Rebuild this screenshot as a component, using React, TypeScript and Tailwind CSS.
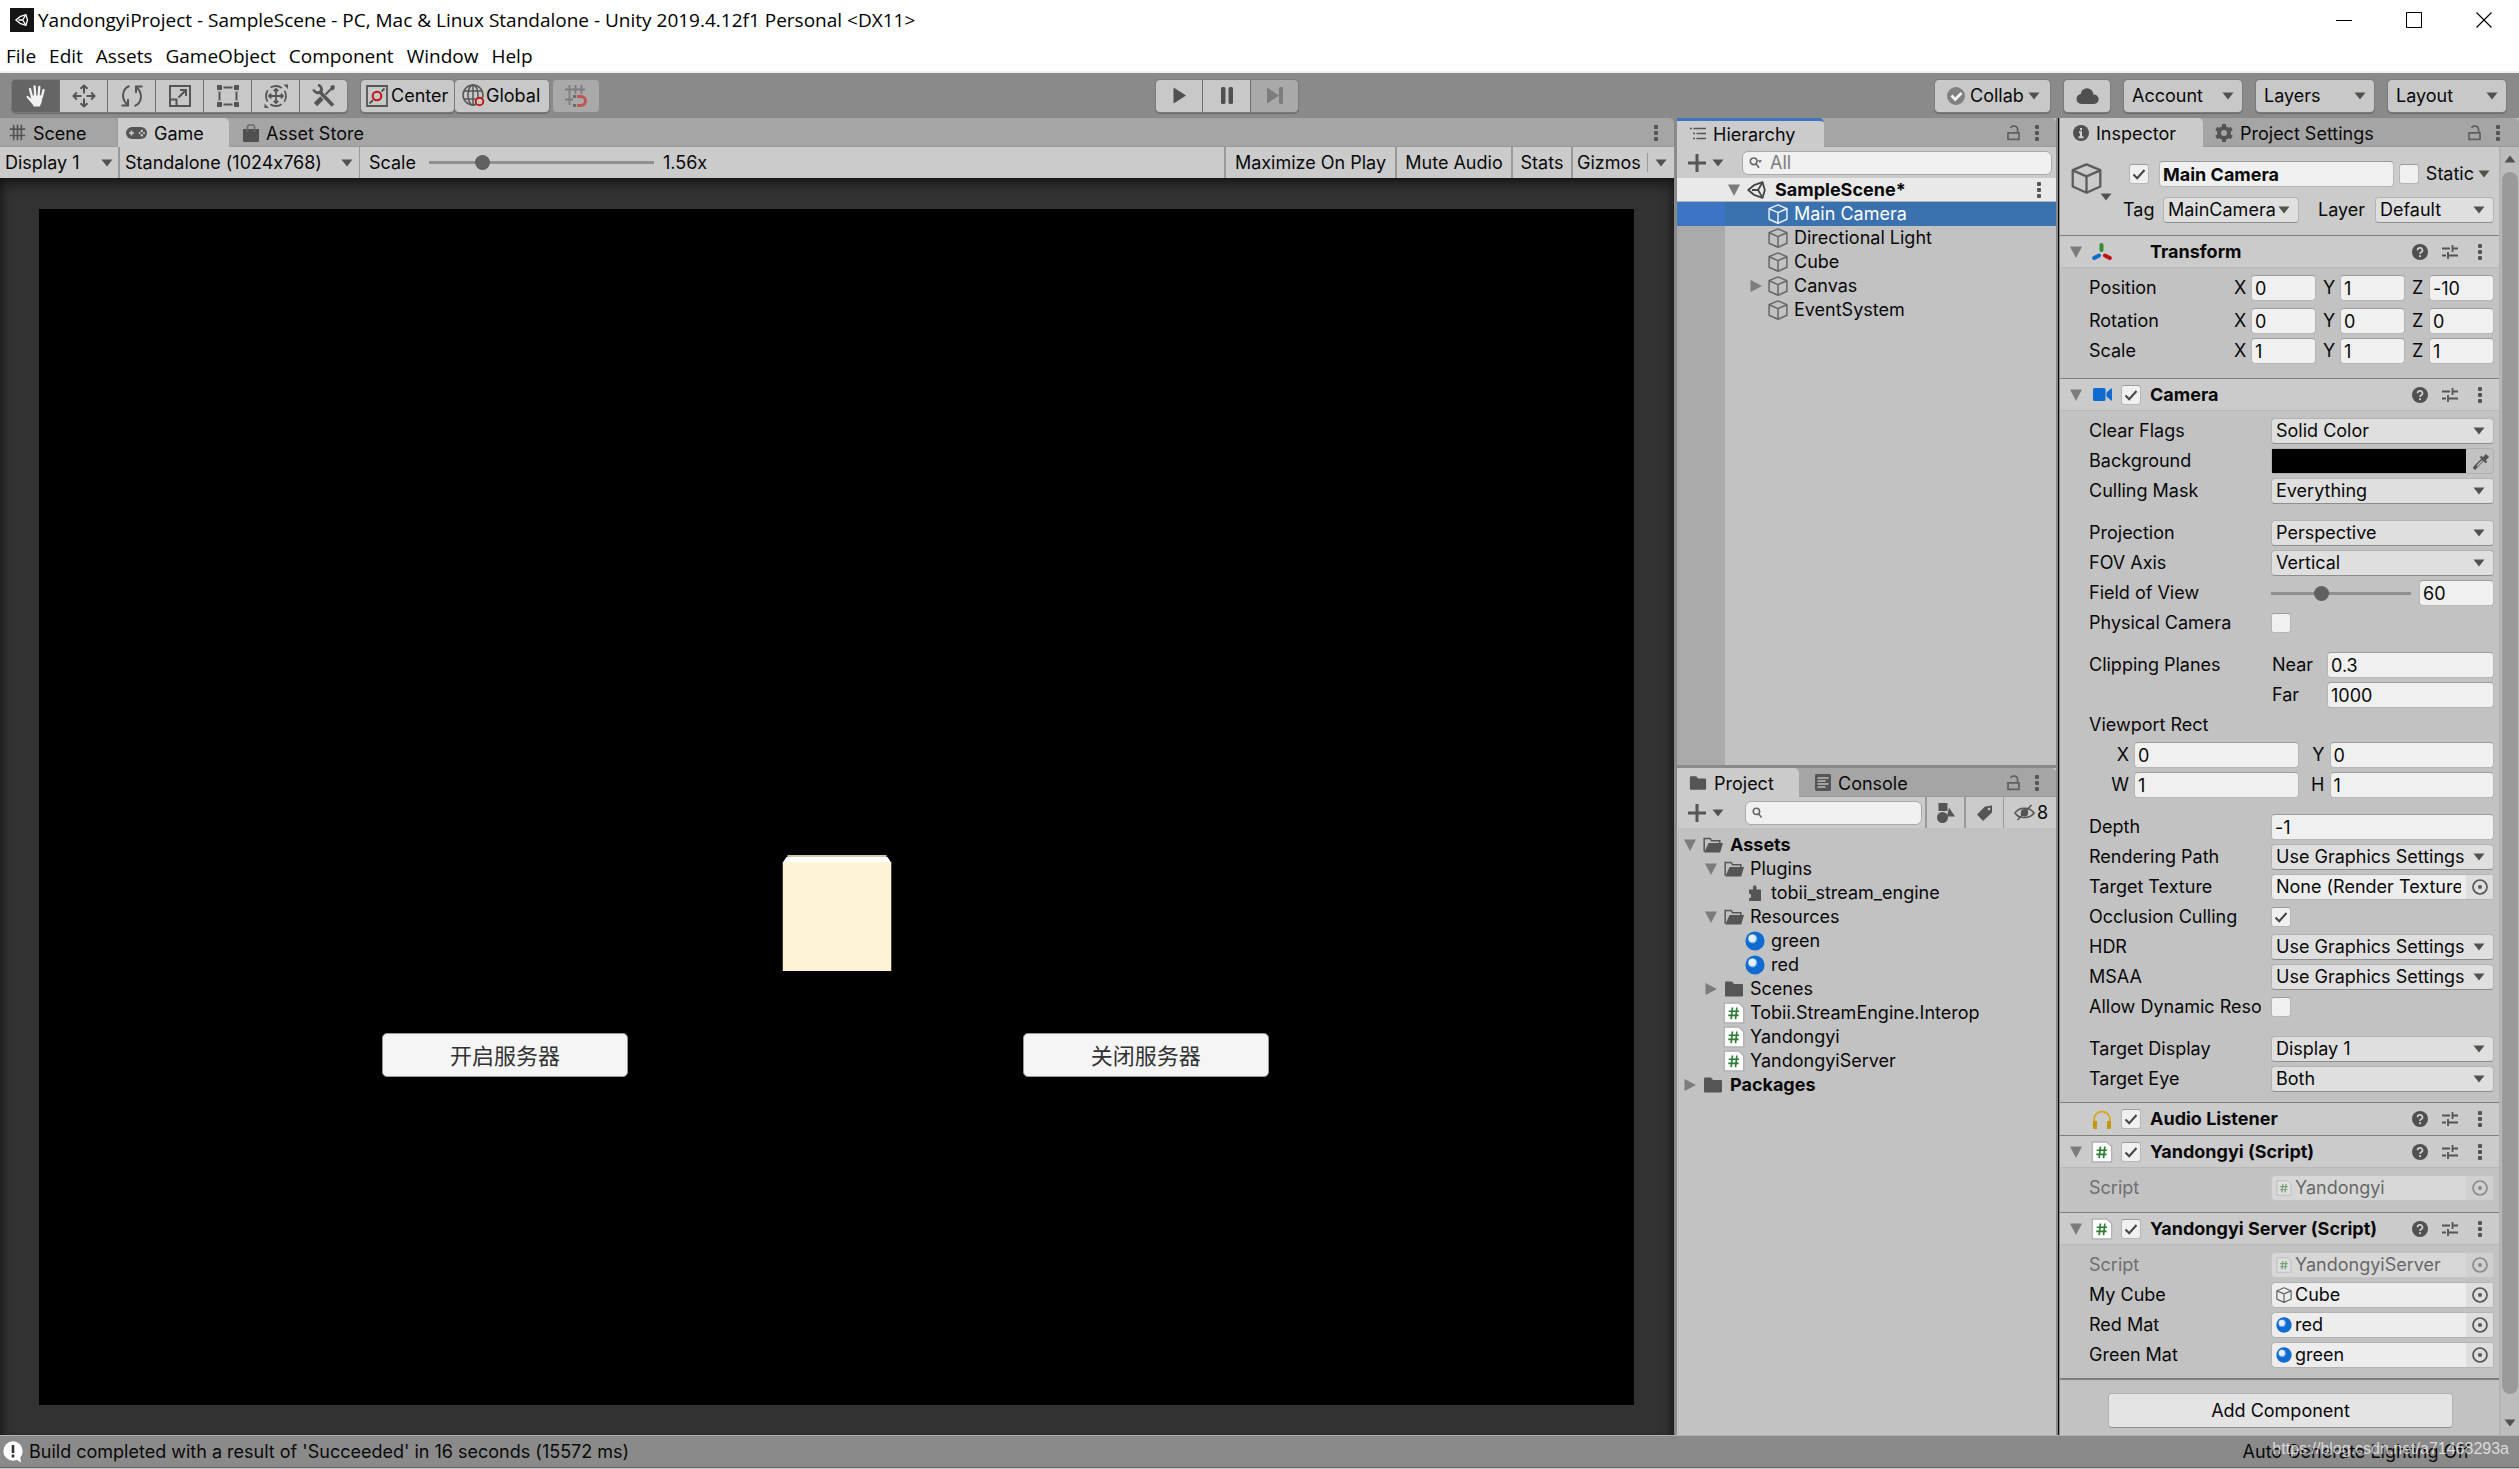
import React, { useId } from "react";

/* ---------- icons ---------- */

type IconProps = { className?: string };

const Svg = ({ size = 20, children, className = "" }: { size?: number; children: React.ReactNode; className?: string }) => (
  <svg width={size} height={size} viewBox="0 0 20 20" fill="none" stroke="#555" strokeWidth="1.5" className={"shrink-0 " + className} aria-hidden="true">
    {children}
  </svg>
);

const Down = ({ className = "" }: IconProps) => (
  <svg width="12" height="8" viewBox="0 0 12 8" className={"shrink-0 " + className} aria-hidden="true">
    <path d="M0.5 0.5h11L6 7.5z" fill="#52524a" />
  </svg>
);

const Fold = ({ open = true, label }: { open?: boolean; label: string }) => (
  <button type="button" aria-label={"Toggle " + label} className="flex size-3 shrink-0 items-center justify-center">
    <svg width="12" height="12" viewBox="0 0 12 12">
      <path d={open ? "M0 0.5h12L6 12z" : "M0.5 0L12 6L0.5 12z"} fill="#7c7c7c" />
    </svg>
  </button>
);

const Kebab = ({ label = "More options" }: { label?: string }) => (
  <button type="button" aria-label={label} className="flex h-5 w-3 shrink-0 items-center justify-center">
    <svg width="4" height="16" viewBox="0 0 4 16" fill="#555">
      <rect x="0" y="0" width="4" height="4" rx="1" />
      <rect x="0" y="6" width="4" height="4" rx="1" />
      <rect x="0" y="12" width="4" height="4" rx="1" />
    </svg>
  </button>
);

const Lock = () => (
  <button type="button" aria-label="Lock" className="flex h-5 w-3 shrink-0 items-center justify-center">
    <svg width="13" height="16" viewBox="0 0 13 16" fill="none" stroke="#606060" strokeWidth="1.7" className="shrink-0">
      <path d="M1 7.8h11v6.6H1z" />
      <path d="M10.6 7.5V4.2A3 3 0 0 0 7.6 1.2H6.4A3 3 0 0 0 3.6 3" />
    </svg>
  </button>
);

const CubeIcon = ({ size = 20, color = "#666" }: { size?: number; color?: string }) => (
  <Svg size={size}>
    <path d="M10 0.9L18.9 4.6V15.2L10 19.2L1.1 15.2V4.6z M1.1 4.8L10 8.6L18.9 4.8 M10 8.6V19" stroke={color} strokeWidth="1.5" strokeLinejoin="round" />
  </Svg>
);

const UnityIcon = ({ size = 20, color = "#444" }: { size?: number; color?: string }) => (
  <Svg size={size}>
    <path d="M1.2 10L7 5.2L15.6 2.2L17.8 10L15.6 17.8L7 14.8z" stroke={color} strokeWidth="1.8" strokeLinejoin="round" />
    <path d="M5 10H11 M11 10L15 3.4 M11 10L15 16.6" stroke={color} strokeWidth="1.8" />
  </Svg>
);

const Folder = ({ size = 20 }: { size?: number }) => (
  <Svg size={size}>
    <path d="M1 3.5a1 1 0 0 1 1-1h6l2 2.5h8a1 1 0 0 1 1 1V16.500a1 1 0 0 1-1 1H2a1 1 0 0 1-1-1z" fill="#555" stroke="none" />
  </Svg>
);

const FolderOpen = () => (
  <Svg>
    <path d="M1.2 16.500V3.400h5.800l1.600 2.300h8.200v2.500" stroke="#555" strokeWidth="1.500" />
    <path d="M5.600 8h14.400l-2.800 9.500H1.200z" fill="#555" stroke="none" />
  </Svg>
);

const Plugin = () => (
  <Svg>
    <path d="M4 6.500h4V4a1.700 1.700 0 0 1 3.500 0v2.500h4.500V18H4v-2.800a2.200 2.200 0 1 0 0-4.400z" fill="#555" stroke="none" />
  </Svg>
);

const Material = ({ size = 20 }: { size?: number }) => (
  <Svg size={size}>
    <circle cx="10" cy="10" r="9.600" fill="#0f6bd0" stroke="none" />
    <circle cx="7.600" cy="7.800" r="4.600" fill="#7fb4ee" stroke="none" />
    <circle cx="7.300" cy="7.400" r="3.600" fill="#e3effb" stroke="none" />
  </Svg>
);

const ScriptIcon = ({ size = 22 }: { size?: number }) => (
  <Svg size={size}>
    <path d="M1.200 1h13L18.800 5v14H1.200z" fill="#fdfdfd" stroke="#aaa" strokeWidth="1" strokeLinejoin="round" />
    <path d="M8.600 5L7.400 15.500M12.600 5L11.400 15.500M5.200 8.400h9.400M4.800 12.200h9.400" stroke="#2c7f32" strokeWidth="1.500" />
  </Svg>
);

const Help = () => (
  <svg width="16" height="16" viewBox="0 0 16 16" aria-hidden="true">
    <circle cx="8" cy="8" r="8" fill="#505050" />
    <path d="M5.500 6.200a2.500 2.300 0 1 1 3.600 2.100C8.300 8.700 8 9 8 10" fill="none" stroke="#d0d0d0" strokeWidth="1.700" />
    <rect x="7.100" y="11.200" width="1.900" height="1.900" fill="#d0d0d0" />
  </svg>
);

const Sliders = () => (
  <svg width="16" height="16" viewBox="0 0 16 16" fill="none" stroke="#555" strokeWidth="1.800" aria-hidden="true">
    <path d="M0 4.500h8M10.500 4.500H16M10.500 1v7M0 11.500h4M6 11.500H16M6 8v7" />
  </svg>
);

const Search = ({ caret = false }: { caret?: boolean }) => (
  <svg width="14" height="14" viewBox="0 0 14 14" fill="none" stroke="#666" strokeWidth="1.800" aria-hidden="true">
    <circle cx="5" cy="5.200" r="3.600" />
    <path d="M7.600 8l3.200 4" />
    {caret && <path d="M9.400 4h4.600l-2.300 3z" fill="#666" stroke="none" />}
  </svg>
);

const Plus = () => (
  <svg width="18" height="18" viewBox="0 0 18 18" aria-hidden="true">
    <path d="M9 0v18M0 9h18" stroke="#555" strokeWidth="3" />
  </svg>
);

/* ---------- tool icons ---------- */

const Hand = () => (
  <svg width="24" height="24" viewBox="0 0 24 24" fill="none" stroke="#f2f2f2" strokeLinecap="round" aria-hidden="true">
    <path d="M8 13L6 5M11.200 12L10.600 2.500M14.600 12L15.300 2.800M17.600 13.500L19.600 6" strokeWidth="2.300" />
    <path d="M7 11.500h11.400l-.6 6c-.8 2.500-1.600 3.500-2 5h-6c-.6-1.600-2-2.600-3-4.200L2.600 13.200c-.4-1.200.8-1.700 1.700-1L7.200 14.800z" fill="#f2f2f2" stroke="none" />
  </svg>
);

const Move = () => (
  <svg width="24" height="24" viewBox="0 0 24 24" fill="none" stroke="#555" strokeWidth="2" aria-hidden="true">
    <path d="M12 9.500V2M12 14.500V22M9.500 12H2M14.500 12H22M8.500 4.800L12 1.500l3.500 3.300M8.500 19.200L12 22.500l3.500-3.300M4.800 8.500L1.500 12l3.300 3.500M19.200 8.500L22.500 12l-3.300 3.500" />
  </svg>
);

const Rotate = () => (
  <svg width="24" height="24" viewBox="0 0 24 24" fill="none" stroke="#555" strokeWidth="2" aria-hidden="true">
    <path d="M9.500 2C2.500 4.500 0.500 13.500 7 20.500M14.500 22C21.500 19.500 23.500 10.500 17 3.500M1.500 21.500H8V15M22.500 2.500H16V9" />
  </svg>
);

const ScaleTool = () => (
  <svg width="24" height="24" viewBox="0 0 24 24" fill="none" stroke="#555" strokeWidth="2" aria-hidden="true">
    <path d="M2 2h20v20H2zM2 15.500h6.500V22M10.500 13.500L18 6M12 6h6v6" />
  </svg>
);

const RectTool = () => (
  <svg width="24" height="24" viewBox="0 0 24 24" fill="#555" stroke="#555" strokeWidth="2" aria-hidden="true">
    <path d="M7.500 3.500h9M7.500 20.500h9M3.500 7.500v9M20.500 7.500v9" />
    <path d="M1 1h5v5H1zM18 1h5v5h-5zM1 18h5v5H1zM18 18h5v5h-5z" stroke="none" />
  </svg>
);

const TransformTool = () => (
  <svg width="24" height="24" viewBox="0 0 24 24" fill="none" stroke="#555" strokeWidth="1.800" aria-hidden="true">
    <circle cx="12" cy="12" r="10" strokeDasharray="12 3.700" strokeDashoffset="6" />
    <path d="M12 5v14M5 12h14M9.700 7.200L12 5l2.300 2.200M9.700 16.800L12 19l2.300-2.200M7.200 9.700L5 12l2.200 2.300M16.800 9.700L19 12l-2.200 2.300" />
    <path d="M19.500 0.500H24V5zM0.500 19.500V24H5z" fill="#555" stroke="none" />
  </svg>
);

const CustomTool = () => (
  <svg width="24" height="24" viewBox="0 0 24 24" fill="none" stroke="#555" aria-hidden="true">
    <path d="M7 7L21 21.500" strokeWidth="3.600" />
    <path d="M1.500 5.500a4.500 4.500 0 0 0 7.500 2A4.500 4.500 0 0 0 6 1" strokeWidth="2.800" />
    <path d="M13.500 10.500L20 4" strokeWidth="2" />
    <path d="M19 2l3.200-.2L22 5l-2.500 1.200z" fill="#555" strokeWidth="1" />
    <path d="M3.500 20.500L10 14" strokeWidth="4.600" />
  </svg>
);

const PivotCenter = () => (
  <svg width="22" height="22" viewBox="0 0 22 22" fill="none" stroke="#555" strokeWidth="1.800" aria-hidden="true">
    <path d="M1 1h20v20H1zM3.500 18.500L7 15M15.500 6.500L18.500 3.500" />
    <circle cx="11" cy="11" r="4.300" stroke="#c01414" strokeWidth="2" />
  </svg>
);

const Globe = () => (
  <svg width="23" height="23" viewBox="0 0 23 23" fill="none" stroke="#555" strokeWidth="1.500" aria-hidden="true">
    <circle cx="11" cy="11" r="10" />
    <path d="M11 1v20M1.800 7h18.400M1.800 15h18.400" />
    <ellipse cx="11" cy="11" rx="5" ry="10" />
    <circle cx="17.500" cy="17.500" r="4.800" fill="#c8c8c8" stroke="none" />
    <circle cx="17.500" cy="17.500" r="3.800" stroke="#c01414" strokeWidth="1.900" />
  </svg>
);

const Snap = () => (
  <svg width="24" height="24" viewBox="0 0 24 24" fill="none" stroke="#7d7d7d" strokeWidth="1.800" aria-hidden="true">
    <path d="M5.500 1v20M11.500 1v9M17.500 1v9M1 5.500h20M1 15.500h8" />
    <path d="M9 12.500h3M9 21.500h3" stroke="#6d6d6d" strokeWidth="3" />
    <path d="M13 12.500h4a4.500 4.500 0 0 1 0 9H13" stroke="#bf5454" strokeWidth="3" />
  </svg>
);

/* ---------- controls ---------- */

const Check = ({ label, checked = false, id }: { label: string; checked?: boolean; id?: string }) => (
  <span className="relative flex size-5 shrink-0">
    <input
      id={id}
      type="checkbox"
      aria-label={label}
      defaultChecked={checked}
      className="peer size-5 appearance-none rounded-[3px] border border-t-[#9c9c9c] border-[#b6b6b6] bg-[#f0f0f0]"
    />
    <svg viewBox="0 0 20 20" className="pointer-events-none absolute inset-0 hidden size-5 peer-checked:block" fill="none" stroke="#444" strokeWidth="2">
      <path d="M4.500 10.500l3.700 3.700L15.500 6" />
    </svg>
  </span>
);

const Dropdown = ({ value, label, id, className = "" }: { value: string; label?: string; id?: string; className?: string }) => (
  <span className={"relative flex h-[26px] min-w-0 items-center rounded-[4px] border border-[#b3b3b3] border-b-[#8e8e8e] bg-[#dfdfdf] " + className}>
    <select id={id} aria-label={label} className="h-full w-full min-w-0 appearance-none overflow-hidden bg-transparent pr-5 pl-1 text-clip whitespace-nowrap outline-none">
      <option>{value}</option>
    </select>
    <Down className="pointer-events-none absolute right-2" />
  </span>
);

const Field = ({ value, label, id, className = "" }: { value: string; label?: string; id?: string; className?: string }) => (
  <input
    id={id}
    aria-label={label}
    defaultValue={value}
    className={"h-[26px] min-w-0 rounded-[4px] border border-[#b6b6b6] border-t-[#9c9c9c] bg-[#f0f0f0] px-[3px] outline-none " + className}
  />
);

const Range = ({ value, label, id, className = "" }: { value: number; label?: string; id?: string; className?: string }) => (
  <input
    id={id}
    aria-label={label}
    type="range"
    min={0}
    max={100}
    defaultValue={value}
    className={
      "h-5 min-w-0 appearance-none bg-transparent [&::-webkit-slider-runnable-track]:h-[3px] [&::-webkit-slider-runnable-track]:bg-[#8f8f8f] [&::-webkit-slider-thumb]:-mt-[6px] [&::-webkit-slider-thumb]:size-[15px] [&::-webkit-slider-thumb]:appearance-none [&::-webkit-slider-thumb]:rounded-full [&::-webkit-slider-thumb]:bg-[#606060] " +
      className
    }
  />
);

const ObjectField = ({ value, icon, disabled = false, id }: { value: string; icon?: React.ReactNode; disabled?: boolean; id?: string }) => (
  <span
    className={
      "flex h-[26px] min-w-0 flex-1 items-center rounded-[4px] border bg-[#ededed] " +
      (disabled ? "border-[#c8c8c8] opacity-50" : "border-[#b3b3b3]")
    }
  >
    <span className="flex min-w-0 flex-1 items-center gap-[3px] overflow-hidden pr-[5px] pl-1">
      {icon}
      <input id={id} readOnly disabled={disabled} defaultValue={value} className="w-full min-w-0 flex-1 bg-transparent outline-none" />
    </span>
    <button type="button" disabled={disabled} aria-label={"Pick " + value} className="flex h-full w-[27px] shrink-0 items-center justify-center rounded-r-[3px] bg-[#dedede]">
      <svg width="16" height="16" viewBox="0 0 16 16" fill="none" stroke="#555" strokeWidth="1.700">
        <circle cx="8" cy="8" r="7" />
        <circle cx="8" cy="8" r="2" fill="#555" stroke="none" />
      </svg>
    </button>
  </span>
);

/* ---------- inspector layout ---------- */

const Row = ({ label, dim = false, children }: { label: string; dim?: boolean; children?: (id: string) => React.ReactNode }) => {
  const id = useId();
  return (
    <div className="flex h-[30px] items-center pr-[5px] pl-[29px]">
      <label htmlFor={id} className={"w-[172px] shrink-0 overflow-hidden whitespace-nowrap " + (dim ? "text-[#6f6f6f]" : "")}>
        {label}
      </label>
      <div className="flex min-w-0 flex-1 items-center pl-[10px]">{children?.(id)}</div>
    </div>
  );
};

const SelectRow = ({ label, value }: { label: string; value: string }) => (
  <Row label={label}>{(id) => <Dropdown id={id} value={value} className="flex-1" />}</Row>
);

const VectorRow = ({ label, values }: { label: string; values: string[] }) => (
  <div className="flex h-[30px] items-center gap-[7px] pr-[5px] pl-[29px]">
    <span className="flex-1">{label}</span>
    {["X", "Y", "Z"].map((axis, i) => (
      <label key={axis} className="flex items-center">
        <span className="w-[17px]">{axis}</span>
        <Field value={values[i]} label={label + " " + axis} className="w-[65px]" />
      </label>
    ))}
  </div>
);

const ComponentHeader = ({ title, icon, fold = true, check = true, divider = true }: { title: string; icon: React.ReactNode; fold?: boolean; check?: boolean; divider?: boolean }) => (
  <div className={"flex h-[33px] items-center border-t border-t-[#7f7f7f] bg-[#cbcbcb] pr-[13px] pl-[10px] " + (divider ? "border-b border-b-[#b8b8b8]" : "")}>
    <div className="flex w-3 shrink-0">{fold && <Fold label={title} />}</div>
    <div className="ml-[9px] flex w-[22px] shrink-0 justify-center">{icon}</div>
    <div className="ml-[8px] w-5 shrink-0">{check && <Check label={"Enable " + title} checked />}</div>
    <h2 className="ml-[9px] flex-1 whitespace-nowrap font-bold">{title}</h2>
    <div className="flex items-center gap-[14px]">
      <button type="button" aria-label={title + " help"}><Help /></button>
      <button type="button" aria-label={title + " presets"}><Sliders /></button>
      <span className="flex pl-[2px]"><Kebab label={title + " options"} /></span>
    </div>
  </div>
);

const Tab = ({ icon, children, active = false, className = "" }: { icon: React.ReactNode; children: string; active?: boolean; className?: string }) => (
  <button
    type="button"
    role="tab"
    aria-selected={active}
    className={"flex h-full shrink-0 items-center gap-[7px] whitespace-nowrap " + (active ? "rounded-tr-[5px] bg-[#cbcbcb] " : "") + className}
  >
    {icon}
    <span className="pt-[2px]">{children}</span>
  </button>
);

const TabBar = ({ children, end, className = "" }: { children: React.ReactNode; end: React.ReactNode; className?: string }) => (
  <div className={"flex h-[29px] shrink-0 items-center rounded-tr-[5px] bg-[#a5a5a5] shadow-[inset_0_-1px_0_#999] " + className}>
    <div role="tablist" className="flex h-full flex-1">{children}</div>
    <div className="flex items-center gap-3">{end}</div>
  </div>
);

/* ---------- header ---------- */

const TitleBar = () => (
  <header className="shrink-0 bg-white font-['Open_Sans','Noto_Sans',sans-serif] text-[19px] text-black">
    <div className="flex h-10 items-center pl-[10px]">
      <span className="flex size-6 items-center justify-center bg-[#151515]">
        <UnityIcon size={14} color="#fff" />
      </span>
      <h1 className="ml-1 flex-1 whitespace-nowrap">YandongyiProject - SampleScene - PC, Mac &amp; Linux Standalone - Unity 2019.4.12f1 Personal &lt;DX11&gt;</h1>
      <div className="flex">
        <button type="button" aria-label="Minimize" className="flex h-10 w-[70px] items-center justify-center">
          <svg width="16" height="16" viewBox="0 0 16 16" stroke="#000"><path d="M0 8.500h16" /></svg>
        </button>
        <button type="button" aria-label="Maximize" className="flex h-10 w-[70px] items-center justify-center">
          <svg width="16" height="16" viewBox="0 0 16 16" fill="none" stroke="#000"><path d="M0.500 0.500h15v15h-15z" /></svg>
        </button>
        <button type="button" aria-label="Close" className="flex h-10 w-[70px] items-center justify-center">
          <svg width="16" height="16" viewBox="0 0 16 16" stroke="#000" strokeWidth="1.200"><path d="M0.500 0.500l15 15M15.500 0.500l-15 15" /></svg>
        </button>
      </div>
    </div>
    <nav className="flex h-[33px] items-center gap-[13px] border-b-2 border-[#f0f0f0] pl-[6px]">
      {["File", "Edit", "Assets", "GameObject", "Component", "Window", "Help"].map((m) => (
        <button key={m} type="button">{m}</button>
      ))}
    </nav>
  </header>
);

const tools: [string, React.ReactNode][] = [
  ["Hand", <Hand />],
  ["Move", <Move />],
  ["Rotate", <Rotate />],
  ["Scale", <ScaleTool />],
  ["Rect", <RectTool />],
  ["Transform", <TransformTool />],
  ["Custom tools", <CustomTool />],
];

const barButton = "flex h-8 items-center whitespace-nowrap rounded-[4px] bg-[#c8c8c8] shadow-[0_0_0_1px_#7b7b7b,0_1px_0_1px_#6a6a6a] ";

const MainToolbar = () => (
  <div className="flex h-[45px] shrink-0 items-center bg-[#8a8a8a] pr-[13px] pl-3">
    <div className="flex h-8 gap-px overflow-hidden rounded-[4px] bg-[#6f6f6f] shadow-[0_0_0_1px_#7b7b7b,0_1px_0_1px_#6a6a6a]">
      {tools.map(([name, icon], i) => (
        <button key={name} type="button" aria-label={name} aria-pressed={i === 0} className={"flex w-[47px] items-center justify-center " + (i === 0 ? "bg-[#656565]" : "bg-[#c8c8c8]")}>
          {icon}
        </button>
      ))}
    </div>
    <button type="button" className={barButton + "ml-[14px] w-[93px] gap-[3px] pl-[5px]"}><PivotCenter />Center</button>
    <button type="button" className={barButton + "ml-px w-[94px] gap-[1px] pl-[7px]"}><Globe />Global</button>
    <button type="button" aria-label="Grid snapping" className="ml-[4px] flex h-8 w-[46px] items-center justify-center rounded-[4px] bg-[#a9a9a9]"><Snap /></button>
    <div className="flex-[7]" />
    <div className="flex h-8 gap-px overflow-hidden rounded-[4px] bg-[#6f6f6f] shadow-[0_0_0_1px_#7b7b7b,0_1px_0_1px_#6a6a6a]">
      <button type="button" aria-label="Play" className="flex w-[46px] items-center justify-center bg-[#c8c8c8]">
        <svg width="13" height="17" viewBox="0 0 13 17"><path d="M0.500 0.500L13 8.500L0.500 16.500z" fill="#505050" /></svg>
      </button>
      <button type="button" aria-label="Pause" className="flex w-[47px] items-center justify-center bg-[#c8c8c8]">
        <svg width="12" height="17" viewBox="0 0 12 17" fill="#505050"><rect width="4.500" height="17" rx="1.500" /><rect x="7.500" width="4.500" height="17" rx="1.500" /></svg>
      </button>
      <button type="button" aria-label="Step" className="flex w-[47px] items-center justify-center bg-[#a9a9a9]">
        <svg width="16" height="17" viewBox="0 0 16 17" fill="#7c7c7c"><path d="M0 0.500L12 8.500L0 16.500z" /><rect x="12" width="4" height="17" rx="1.500" /></svg>
      </button>
    </div>
    <div className="flex-[8]" />
    <div className="flex gap-[14px]">
      <button type="button" className={barButton + "w-[115px] gap-[5px] pl-3"}>
        <svg width="18" height="18" viewBox="0 0 18 18"><circle cx="9" cy="9" r="9" fill="#808080" /><path d="M4.500 8.500l3.700 4L14.500 6" fill="none" stroke="#f2f2f2" strokeWidth="2.800" /></svg>
        Collab
        <Down className="-ml-px" />
      </button>
      <button type="button" aria-label="Services" className={barButton + "w-[46px] justify-center"}>
        <svg width="23" height="16" viewBox="0 0 23 16" fill="#505050"><circle cx="5.500" cy="11" r="5" /><circle cx="11" cy="6.500" r="6.300" /><circle cx="18" cy="11.300" r="4.700" /><rect x="5" y="9" width="13" height="7" /></svg>
      </button>
      {["Account", "Layers", "Layout"].map((t) => (
        <span key={t} className={barButton + "relative w-[118px]"}>
          <select aria-label={t} className="size-full appearance-none bg-transparent pl-2 outline-none"><option>{t}</option></select>
          <Down className="pointer-events-none absolute right-2" />
        </span>
      ))}
    </div>
  </div>
);

/* ---------- game panel ---------- */

const gameButton = "absolute bottom-[27.400%] flex h-[44px] w-[246px] items-center justify-center rounded-[5px] border border-[#999] bg-[#f5f5f5] pb-[2px] font-['Noto_Sans_CJK_SC',sans-serif] text-[22px] text-[#323232] ";

const GamePanel = () => (
  <main className="flex min-w-0 flex-1 flex-col">
    <TabBar className="pr-3" end={<Kebab />}>
      <Tab className="w-[118px] pl-[9px] shadow-[inset_-1px_0_0_#999]" icon={<Svg size={17}><path d="M5.500 1v18M10 1v18M14.500 1v18M1 6h18M1 13.500h18" strokeWidth="2" /></Svg>}>Scene</Tab>
      <Tab active className="w-[111px] gap-[4px] pl-[8px]" icon={
        <svg width="21" height="12" viewBox="0 0 21 12" className="shrink-0">
          <rect width="21" height="12" rx="6" fill="#555" />
          <path d="M3 6h5M5.500 3.500v5" stroke="#cbcbcb" strokeWidth="1.600" />
          <circle cx="15.800" cy="4" r="1.200" fill="#cbcbcb" /><circle cx="15.800" cy="8.200" r="1.200" fill="#cbcbcb" /><circle cx="13.500" cy="6" r="1" fill="#cbcbcb" /><circle cx="18" cy="6" r="1" fill="#cbcbcb" />
        </svg>}>Game</Tab>
      <Tab className="pl-[14px]" icon={
        <svg width="16" height="18" viewBox="0 0 16 18" className="shrink-0"><path d="M0 5h16v11.500a1.500 1.500 0 0 1-1.500 1.500h-13A1.500 1.500 0 0 1 0 16.500z" fill="#505050" /><path d="M4.500 8V3a2 2 0 0 1 2-2h3a2 2 0 0 1 2 2v5" fill="none" stroke="#6a6a6a" strokeWidth="1.600" /></svg>}>Asset Store</Tab>
    </TabBar>
    <div className="flex h-[31px] shrink-0 items-stretch bg-[#cbcbcb] whitespace-nowrap [&>*]:border-[#999]">
      <label className="relative flex w-[120px] items-center border-r-2">
        <select aria-label="Display" className="size-full appearance-none pl-[5px] outline-none"><option>Display 1</option></select>
        <Down className="pointer-events-none absolute right-[5px]" />
      </label>
      <label className="relative flex w-[240px] items-center border-r">
        <select aria-label="Aspect ratio" className="size-full appearance-none pl-[5px] outline-none"><option>Standalone (1024x768)</option></select>
        <Down className="pointer-events-none absolute right-[6px]" />
      </label>
      <label className="flex items-center pl-[9px]">
        <span className="w-[60px]">Scale</span>
        <Range value={22} className="w-[225px]" />
      </label>
      <output className="flex items-center pl-[9px]">1.56x</output>
      <div className="flex-1" />
      <button type="button" className="w-[171px] border-l-2">Maximize On Play</button>
      <button type="button" className="w-[116px] border-l-2">Mute Audio</button>
      <button type="button" className="w-[60px] border-l-2">Stats</button>
      <button type="button" className="flex w-[103px] items-center border-l-2 pl-[4px]">
        Gizmos
        <span className="ml-auto flex h-[19px] w-[27px] items-center border-l border-[#999] pl-[7px]"><Down /></span>
      </button>
    </div>
    <div className="min-h-0 flex-1 bg-[#323232] pt-[31px] pr-10 pb-[30px] pl-[39px] shadow-[inset_0_12px_14px_-8px_#111,inset_10px_0_10px_-8px_#1c1c1c,inset_-10px_0_10px_-8px_#1c1c1c]">
      <div className="relative size-full bg-black">
        <svg width="109" height="116" viewBox="0 0 109 116" className="absolute top-[54%] left-1/2 -translate-x-1/2" aria-label="Cube">
          <path d="M5 0h99v3H5z" fill="#d4c8a8" />
          <path d="M4 2h101l4 6H0z" fill="#fff" />
          <path d="M0 7h109v109H0z" fill="#fef3d7" />
        </svg>
        <button type="button" className={gameButton + "left-[21.500%]"}>开启服务器</button>
        <button type="button" className={gameButton + "right-[22.900%]"}>关闭服务器</button>
      </div>
    </div>
  </main>
);

/* ---------- hierarchy and project ---------- */

const HierarchyPanel = () => (
  <section className="flex min-h-0 grow-[647] basis-0 flex-col bg-[#c2c2c2]" aria-label="Hierarchy">
    <TabBar className="pr-[13px]" end={<><Lock /><Kebab /></>}>
      <Tab active className="w-[147px] border-t-3 border-[#3d75c5] pl-[13px]" icon={
        <svg width="16" height="14" viewBox="0 0 16 14" stroke="#555" strokeWidth="1.700" className="shrink-0"><path d="M0 1.500h2M3.500 1.500H16M3 6.500h2M6.500 6.500H16M3 11.500h2M6.500 11.500H16" /></svg>}>Hierarchy</Tab>
    </TabBar>
    <div className="flex h-[31px] shrink-0 items-center bg-[#cbcbcb] pr-[4px] pl-[11px]">
      <button type="button" aria-label="Create object" className="flex items-center gap-[6px]"><Plus /><Down /></button>
      <label className="ml-[18px] flex h-6 flex-1 items-center gap-2 rounded-[6px] border border-[#a8a8a8] bg-[#f0f0f0] pl-[6px]">
        <Search caret />
        <input aria-label="Search hierarchy" placeholder="All" className="w-full bg-transparent outline-none placeholder:text-[#7d7d7d]" />
      </label>
    </div>
    <div className="flex min-h-0 flex-1 flex-col bg-linear-to-r from-[#aaaaaa] from-[48px] to-[#c2c2c2] to-[48px]">
      <div className="flex h-6 shrink-0 items-center border-b border-[#b5b5b5] bg-[#e9e9e9] pr-[11px] pl-[51px]">
        <Fold label="SampleScene" />
        <span className="ml-[7px]"><UnityIcon /></span>
        <span className="ml-[8px] flex-1 font-bold">SampleScene*</span>
        <Kebab label="Scene options" />
      </div>
      <ul>
        {["Main Camera", "Directional Light", "Cube", "Canvas", "EventSystem"].map((name, i) => (
          <li key={name} className={"flex h-6 items-center gap-[6px] pl-[73px] whitespace-nowrap " + (i === 0 ? "bg-linear-to-r from-[#3d75c5] from-[48px] to-[#3a72b0] to-[48px] text-white" : "")}>
            <span className="flex w-3">{name === "Canvas" && <Fold open={false} label={name} />}</span>
            <CubeIcon color={i === 0 ? "#e8eef6" : "#666"} />
            {name}
          </li>
        ))}
      </ul>
    </div>
  </section>
);

type Node = { name: string; depth: number; icon: React.ReactNode; open?: boolean; bold?: boolean };

const nodes: Node[] = [
  { name: "Assets", depth: 0, icon: <FolderOpen />, open: true, bold: true },
  { name: "Plugins", depth: 1, icon: <FolderOpen />, open: true },
  { name: "tobii_stream_engine", depth: 2, icon: <Plugin /> },
  { name: "Resources", depth: 1, icon: <FolderOpen />, open: true },
  { name: "green", depth: 2, icon: <Material /> },
  { name: "red", depth: 2, icon: <Material /> },
  { name: "Scenes", depth: 1, icon: <Folder />, open: false },
  { name: "Tobii.StreamEngine.Interop", depth: 1, icon: <ScriptIcon /> },
  { name: "Yandongyi", depth: 1, icon: <ScriptIcon /> },
  { name: "YandongyiServer", depth: 1, icon: <ScriptIcon /> },
  { name: "Packages", depth: 0, icon: <Folder />, open: false, bold: true },
];

const indents = ["pl-[7px]", "pl-[28px]", "pl-[49px]"];

const ProjectPanel = () => (
  <section className="flex min-h-0 grow-[667] basis-0 flex-col bg-[#c2c2c2]" aria-label="Project">
    <TabBar className="pr-[13px]" end={<><Lock /><Kebab /></>}>
      <Tab active className="w-[122px] gap-[6px] pl-3" icon={<Folder size={18} />}>Project</Tab>
      <Tab className="pl-4" icon={
        <svg width="16" height="17" viewBox="0 0 16 17" className="shrink-0"><rect width="16" height="17" rx="1.500" fill="#555" /><path d="M2.500 4h11M2.500 7h8M2.500 10h11M2.500 13h8" stroke="#bcbcbc" strokeWidth="1.300" /></svg>}>Console</Tab>
    </TabBar>
    <div className="flex h-[31px] shrink-0 items-center bg-[#cbcbcb] pl-[11px]">
      <button type="button" aria-label="Create asset" className="flex items-center gap-[6px]"><Plus /><Down /></button>
      <label className="mr-[3px] ml-[21px] flex h-6 min-w-0 flex-1 items-center gap-2 rounded-[6px] border border-[#a8a8a8] bg-[#f0f0f0] pl-[6px]">
        <Search />
        <input aria-label="Search project" className="w-full min-w-0 bg-transparent outline-none" />
      </label>
      <button type="button" aria-label="Search by type" className="flex h-full w-[39px] items-center justify-center border-l-2 border-[#999]">
        <svg width="18" height="20" viewBox="0 0 18 20" fill="#555"><path d="M1.500 0h9v8h-9zM12 4.500l6 9h-8z" /><circle cx="5.500" cy="14.500" r="5.500" /></svg>
      </button>
      <button type="button" aria-label="Search by label" className="flex h-full w-[39px] items-center justify-center border-l-2 border-[#999]">
        <svg width="16" height="16" viewBox="0 0 16 16"><path d="M8 1.500L15 0.500V7.500L6 16L0 9.500z" fill="#555" /><circle cx="12" cy="4" r="1.300" fill="#cbcbcb" /></svg>
      </button>
      <button type="button" aria-label="Hidden packages" className="flex h-full w-[53px] items-center gap-[2px] border-l border-[#999] pl-[10px]">
        <svg width="21" height="17" viewBox="0 0 21 17" fill="none" stroke="#555" strokeWidth="1.500"><path d="M1 9c4-6.500 15-6.500 19 0c-4 6-15 6-19 0zM3.500 16L17.500 1" /><circle cx="10.500" cy="8.800" r="3" fill="#555" /></svg>
        8
      </button>
    </div>
    <ul className="pt-[5px]">
      {nodes.map((n) => (
        <li key={n.name} className={"flex h-6 items-center whitespace-nowrap " + indents[n.depth]}>
          <span className="flex w-3">{n.open !== undefined && <Fold open={n.open} label={n.name} />}</span>
          <span className="ml-[6px] flex w-[22px] items-center justify-center">{n.icon}</span>
          <span className={n.bold ? "ml-[6px] font-bold" : "ml-[5px]"}>{n.name}</span>
        </li>
      ))}
    </ul>
  </section>
);

/* ---------- inspector ---------- */

const CameraComponent = () => (
  <section aria-label="Camera">
    <ComponentHeader title="Camera" icon={
      <svg width="19" height="13" viewBox="0 0 19 13" fill="#0f6bd0"><rect width="12.500" height="13" rx="1.500" /><path d="M13.500 4.500L18 0.500H19V12.500H18L13.500 8.500z" /></svg>} />
    <div className="pt-[5px] pb-2">
      <SelectRow label="Clear Flags" value="Solid Color" />
      <Row label="Background">
        {(id) => (
          <span className="flex h-[26px] flex-1 items-stretch rounded-[4px] border border-[#b0b0b0]">
            <button id={id} type="button" aria-label="Background colour" className="flex-1 bg-black" />
            <button type="button" aria-label="Pick colour" className="flex w-[27px] items-center justify-center pl-1">
              <svg width="17" height="17" viewBox="0 0 17 17" fill="none" stroke="#555"><path d="M10 6.500L3 13.500L1 16" strokeWidth="3.500" /><path d="M9.500 7.500L4 13" stroke="#c2c2c2" strokeWidth="1.300" /><path d="M7.500 3.500l6 6" strokeWidth="2.200" /><path d="M11 6l3.500-3.500" strokeWidth="4.500" /></svg>
            </button>
          </span>
        )}
      </Row>
      <SelectRow label="Culling Mask" value="Everything" />
      <div className="pt-3">
        <SelectRow label="Projection" value="Perspective" />
        <SelectRow label="FOV Axis" value="Vertical" />
        <Row label="Field of View">
          {(id) => (
            <>
              <Range id={id} value={34} className="flex-1" />
              <Field value="60" label="Field of View value" className="ml-2 w-[75px]" />
            </>
          )}
        </Row>
        <Row label="Physical Camera">{(id) => <Check id={id} label="Physical Camera" />}</Row>
      </div>
      <div className="pt-3">
        <Row label="Clipping Planes">{(id) => <><span className="w-[56px] pl-[1px]">Near</span><Field id={id} value="0.3" className="flex-1" /></>}</Row>
        <Row label="">{(id) => <><label htmlFor={id} className="w-[56px] pl-[1px]">Far</label><Field id={id} value="1000" className="flex-1" /></>}</Row>
        <Row label="Viewport Rect" />
        {[["X", "0", "Y", "0"], ["W", "1", "H", "1"]].map(([a, av, b, bv]) => (
          <div key={a} className="flex h-[30px] items-center pr-[5px] pl-[49px]">
            <label className="flex min-w-0 flex-1 items-center"><span className="w-[25px] shrink-0 pr-[5px] text-right">{a}</span><Field value={av} className="w-full" /></label>
            <label className="ml-[6px] flex min-w-0 flex-1 items-center"><span className="w-[25px] shrink-0 pr-[5px] text-right">{b}</span><Field value={bv} className="w-full" /></label>
          </div>
        ))}
      </div>
      <div className="pt-3">
        <Row label="Depth">{(id) => <Field id={id} value="-1" className="flex-1" />}</Row>
        <SelectRow label="Rendering Path" value="Use Graphics Settings" />
        <Row label="Target Texture">{(id) => <ObjectField id={id} value="None (Render Texture)" />}</Row>
        <Row label="Occlusion Culling">{(id) => <Check id={id} label="Occlusion Culling" checked />}</Row>
        <SelectRow label="HDR" value="Use Graphics Settings" />
        <SelectRow label="MSAA" value="Use Graphics Settings" />
        <Row label="Allow Dynamic Resolution">{(id) => <Check id={id} label="Allow Dynamic Resolution" />}</Row>
      </div>
      <div className="pt-3">
        <SelectRow label="Target Display" value="Display 1" />
        <SelectRow label="Target Eye" value="Both" />
      </div>
    </div>
  </section>
);

const Inspector = () => (
  <aside className="flex w-[459px] shrink-0 flex-col bg-[#c2c2c2]" aria-label="Inspector">
    <TabBar className="pr-[15px]" end={<><Lock /><Kebab /></>}>
      <Tab active className="w-[143px] pl-[13px]" icon={
        <svg width="16" height="16" viewBox="0 0 16 16" className="shrink-0"><circle cx="8" cy="8" r="8" fill="#505050" /><path d="M8 3v2.200M6 7.200h2V12M5.500 12.200h5" stroke="#d0d0d0" strokeWidth="2" fill="none" /></svg>}>Inspector</Tab>
      <Tab className="gap-[6px] pl-3" icon={
        <svg width="18" height="18" viewBox="0 0 18 18" className="shrink-0"><circle cx="9" cy="9" r="5" fill="none" stroke="#555" strokeWidth="4" /><path d="M9 0v4M9 14v4M1.200 4.500l3.500 2M13.300 11.500l3.500 2M1.200 13.500l3.500-2M13.300 6.500l3.500-2" stroke="#555" strokeWidth="4" /></svg>}>Project Settings</Tab>
    </TabBar>
    <div className="flex min-h-0 flex-1">
      <div className="flex min-w-0 flex-1 flex-col">
        <div className="flex h-[88px] shrink-0 bg-[#cbcbcb] pt-[13px] pr-[5px] pl-[11px]">
          <div className="flex w-[40px] shrink-0 items-start pt-[3px]">
            <CubeIcon size={31} color="#5c5c5c" />
            <Down className="-ml-[2px] mt-[30px]" />
          </div>
          <div className="min-w-0 flex-1">
            <div className="flex h-[28px] items-center pl-[18px]">
              <Check label="Active" checked />
              <Field value="Main Camera" label="Name" className="ml-[10px] flex-1 font-bold" />
              <span className="ml-[5px] flex"><Check label="Static" /></span>
              <span className="ml-[7px] flex items-center gap-[4px]">Static<Down /></span>
              <span className="w-[4px]" />
            </div>
            <div className="mt-2 flex h-[28px] items-center pl-3">
              <label htmlFor="tag" className="w-[40px]">Tag</label>
              <Dropdown id="tag" value="MainCamera" className="w-[136px]" />
              <label htmlFor="layer" className="ml-[19px] w-[57px]">Layer</label>
              <Dropdown id="layer" value="Default" className="flex-1" />
            </div>
          </div>
        </div>
        <section aria-label="Transform">
          <ComponentHeader title="Transform" check={false} icon={
            <svg width="20" height="18" viewBox="0 0 20 18" strokeWidth="4" strokeLinecap="round"><path d="M9.500 2v5" stroke="#2f8f35" /><path d="M7 12.500l-4.800 2.600" stroke="#0f6bd0" /><path d="M13 12.500l4.800 2.600" stroke="#c01414" /></svg>} />
          <div className="pt-[5px] pb-3">
            <VectorRow label="Position" values={["0", "1", "-10"]} />
            <div className="pt-[3px]"><VectorRow label="Rotation" values={["0", "0", "0"]} /></div>
            <VectorRow label="Scale" values={["1", "1", "1"]} />
          </div>
        </section>
        <CameraComponent />
        <ComponentHeader title="Audio Listener" fold={false} divider={false} icon={
          <svg width="20" height="19" viewBox="0 0 20 19" fill="none"><path d="M2 15V9.500a8 8 0 0 1 16 0V15" stroke="#d9a520" strokeWidth="1.800" /><path d="M1 11h4v8H2.500A1.500 1.500 0 0 1 1 17.500zM15 11h4v6.500a1.500 1.500 0 0 1-1.500 1.500H15z" fill="#c8960c" /></svg>} />
        <section aria-label="Yandongyi">
          <ComponentHeader title="Yandongyi (Script)" icon={<ScriptIcon />} />
          <div className="pt-[5px] pb-[9px]">
            <Row label="Script" dim>{(id) => <ObjectField id={id} disabled value="Yandongyi" icon={<ScriptIcon size={16} />} />}</Row>
          </div>
        </section>
        <section aria-label="Yandongyi Server" className="border-b-2 border-[#7f7f7f]">
          <ComponentHeader title="Yandongyi Server (Script)" icon={<ScriptIcon />} />
          <div className="pt-[5px] pb-2">
            <Row label="Script" dim>{(id) => <ObjectField id={id} disabled value="YandongyiServer" icon={<ScriptIcon size={16} />} />}</Row>
            <Row label="My Cube">{(id) => <ObjectField id={id} value="Cube" icon={<CubeIcon size={16} />} />}</Row>
            <Row label="Red Mat">{(id) => <ObjectField id={id} value="red" icon={<Material size={16} />} />}</Row>
            <Row label="Green Mat">{(id) => <ObjectField id={id} value="green" icon={<Material size={16} />} />}</Row>
          </div>
        </section>
        <button type="button" className="mt-[13px] mr-[46px] ml-[48px] h-[35px] shrink-0 rounded-[4px] border border-[#b0b0b0] border-b-[#8e8e8e] bg-[#e4e4e4]">Add Component</button>
      </div>
      <div className="flex w-5 shrink-0 flex-col items-center justify-between border-l-2 border-[#b3b3b3] bg-[#bdbdbd] py-2" aria-hidden="true">
        <Down className="rotate-180" />
        <span className="my-[9px] w-4 flex-1 rounded-[8px] bg-[#9a9a9a]" />
        <Down className="mt-4" />
      </div>
    </div>
  </aside>
);

export default function App() {
  return (
    <div className="flex h-screen flex-col overflow-hidden bg-[#8a8a8a] font-[Inter,'Noto_Sans_CJK_SC',sans-serif] text-[18px] leading-6 text-[#090909] [font-feature-settings:'calt'_0]">
      <TitleBar />
      <MainToolbar />
      <div className="flex min-h-0 flex-1">
        <GamePanel />
        <div className="ml-[3px] flex w-[379px] shrink-0 flex-col gap-[3px]">
          <HierarchyPanel />
          <ProjectPanel />
        </div>
        <div className="ml-[2px] w-px bg-black" />
        <div className="ml-px flex"><Inspector /></div>
      </div>
      <footer className="flex h-[33px] shrink-0 items-center justify-between border-t border-b border-t-[#b0b0b0] border-b-[#606060] bg-[#8a8a8a] whitespace-nowrap">
        <span className="flex items-center gap-[6px] pl-[3px]">
          <svg width="20" height="22" viewBox="0 0 20 22"><circle cx="10" cy="10" r="9.700" fill="#fff" /><path d="M11 17l7 4.500l-1-7z" fill="#fff" /><path d="M10 4v8M10 13.500v3" stroke="#333" strokeWidth="2.600" /></svg>
          Build completed with a result of 'Succeeded' in 16 seconds (15572 ms)
        </span>
        <span className="relative pr-[49px]">
          Auto Generate Lighting Off
          <span className="absolute -top-[3px] right-[10px] font-['Liberation_Sans',Arial,sans-serif] text-[16px] text-white/70">https://blog.csdn.net/a71468293a</span>
        </span>
      </footer>
      <div className="h-px shrink-0 bg-[#cfcfcf]" />
    </div>
  );
}
